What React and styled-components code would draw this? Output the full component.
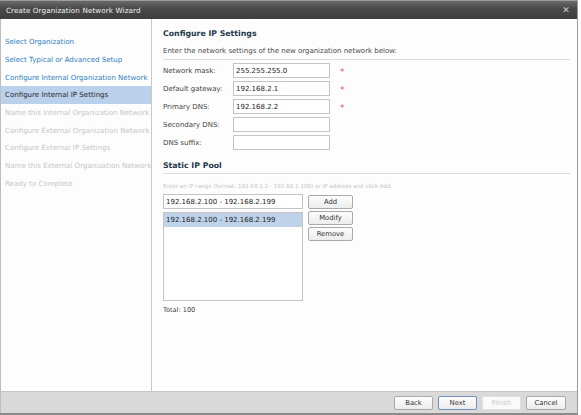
import styled, { createGlobalStyle } from "styled-components";

const Global = createGlobalStyle`
  html, body { margin: 0; padding: 0; background: #ffffff; }
  body { font-family: "DejaVu Sans", Verdana, sans-serif; font-size: 7px; color: #333; }
`;

const steps = [
  { label: "Select Organization", state: "done" },
  { label: "Select Typical or Advanced Setup", state: "done" },
  { label: "Configure Internal Organization Network", state: "done" },
  { label: "Configure Internal IP Settings", state: "current" },
  { label: "Name this Internal Organization Network", state: "todo" },
  { label: "Configure External Organization Network", state: "todo" },
  { label: "Configure External IP Settings", state: "todo" },
  { label: "Name this External Organization Network", state: "todo" },
  { label: "Ready to Complete", state: "todo" },
];

const fields = [
  { label: "Network mask:", value: "255.255.255.0", required: true },
  { label: "Default gateway:", value: "192.168.2.1", required: true },
  { label: "Primary DNS:", value: "192.168.2.2", required: true },
  { label: "Secondary DNS:", value: "", required: false },
  { label: "DNS suffix:", value: "", required: false },
];

export default function App() {
  return (
    <>
      <Global />
      <Window>
        <TitleBar>
          <span>Create Organization Network Wizard</span>
          <Close>✕</Close>
        </TitleBar>
        <Body>
          <Nav>
            {steps.map((s) => (
              <NavItem key={s.label} $state={s.state}>
                {s.label}
              </NavItem>
            ))}
          </Nav>
          <Content>
            <Heading>Configure IP Settings</Heading>
            <Intro>Enter the network settings of the new organization network below:</Intro>
            <Rule />
            <Fields>
              {fields.map((f) => (
                <FieldRow key={f.label}>
                  <FieldLabel>{f.label}</FieldLabel>
                  <TextBox>{f.value}</TextBox>
                  {f.required && <Star>*</Star>}
                </FieldRow>
              ))}
            </Fields>
            <Heading $top={11}>Static IP Pool</Heading>
            <Rule $top={2} />
            <Hint>
              Enter an IP range (format: 192.68.1.2 - 192.68.1.100) or IP address and click Add.
            </Hint>
            <Pool>
              <PoolColumn>
                <PoolInput>192.168.2.100 - 192.168.2.199</PoolInput>
                <ListBox>
                  <ListItem $selected>192.168.2.100 - 192.168.2.199</ListItem>
                </ListBox>
              </PoolColumn>
              <PoolButtons>
                <Btn $w={45}>Add</Btn>
                <Btn $w={45}>Modify</Btn>
                <Btn $w={45}>Remove</Btn>
              </PoolButtons>
            </Pool>
            <Total>Total: 100</Total>
          </Content>
        </Body>
        <Footer>
          <Btn $w={39}>Back</Btn>
          <Btn $w={39} $primary>Next</Btn>
          <Btn $w={39} disabled>Finish</Btn>
          <Btn $w={40}>Cancel</Btn>
        </Footer>
      </Window>
    </>
  );
}

const Window = styled.div`
  width: 577px;
  height: 413px;
  border-right: 1px solid #9a9a9a;
  border-bottom: 2px solid #8a8a8a;
  display: flex;
  flex-direction: column;
  background: #fdfdfd;
`;

const TitleBar = styled.div`
  height: 19px;
  flex: none;
  display: flex;
  align-items: center;
  justify-content: space-between;
  padding: 0 7px 0 6px;
  background: linear-gradient(#6a6a6a, #4a4a4a 40%, #3e3e3e);
  border-top: 1px solid #9c9c9c;
  box-sizing: border-box;
  color: #f0f0f0;
  font-size: 7.2px;
  letter-spacing: 0.1px;
`;

const Close = styled.span`
  font-size: 9px;
  color: #cfcfcf;
  font-weight: bold;
`;

const Body = styled.div`
  flex: 1;
  display: flex;
  border-left: 1px solid #bdbdbd;
  min-height: 0;
`;

const Nav = styled.div`
  width: 150px;
  flex: none;
  border-right: 1px solid #c8c8c8;
  padding-top: 14px;
  display: flex;
  flex-direction: column;
`;

const NavItem = styled.div`
  height: 17.7px;
  display: flex;
  align-items: center;
  padding-left: 4px;
  white-space: nowrap;
  font-size: 7.05px;
  color: ${(p) =>
    p.$state === "done" ? "#2f7fc4" : p.$state === "current" ? "#2a2a2a" : "#c6c6c6"};
  background: ${(p) => (p.$state === "current" ? "#bbd0ea" : "transparent")};
`;

const Content = styled.div`
  flex: 1;
  padding: 10px 7px 0 11px;
  display: flex;
  flex-direction: column;
`;

const Heading = styled.div`
  font-weight: bold;
  font-size: 7.8px;
  line-height: 10px;
  color: #23384c;
  margin-top: ${(p) => p.$top || 0}px;
`;

const Intro = styled.div`
  margin-top: 8px;
  line-height: 9px;
  color: #4a4a4a;
`;

const Rule = styled.div`
  height: 1px;
  background: #dcdcdc;
  margin-top: ${(p) => (p.$top != null ? p.$top : 3)}px;
`;

const Fields = styled.div`
  margin-top: 3px;
  display: flex;
  flex-direction: column;
  gap: 3px;
`;

const FieldRow = styled.div`
  display: flex;
  align-items: center;
  height: 15px;
`;

const FieldLabel = styled.div`
  width: 70px;
  color: #444;
`;

const TextBox = styled.div`
  width: 97px;
  height: 15px;
  box-sizing: border-box;
  border: 1px solid #c4c4c4;
  background: #fff;
  padding-left: 2px;
  display: flex;
  align-items: center;
  color: #222;
`;

const Star = styled.span`
  margin-left: 10px;
  color: #e05a5a;
  font-size: 9px;
  padding-top: 3px;
`;

const Hint = styled.div`
  margin-top: 9px;
  line-height: 7px;
  font-size: 5.6px;
  color: #c4c4c4;
  white-space: nowrap;
`;

const Pool = styled.div`
  margin-top: 4px;
  display: flex;
  gap: 5px;
`;

const PoolColumn = styled.div`
  display: flex;
  flex-direction: column;
  gap: 3px;
`;

const PoolInput = styled(TextBox)`
  width: 140px;
  height: 15px;
`;

const ListBox = styled.div`
  width: 140px;
  height: 89px;
  box-sizing: border-box;
  border: 1px solid #c4c4c4;
  background: #fff;
`;

const ListItem = styled.div`
  height: 14px;
  display: flex;
  align-items: center;
  padding-left: 2px;
  color: #222;
  background: ${(p) => (p.$selected ? "#bed3ea" : "transparent")};
`;

const PoolButtons = styled.div`
  padding-top: 1px;
  display: flex;
  flex-direction: column;
  gap: 2px;
`;

const Btn = styled.button`
  width: ${(p) => p.$w}px;
  height: 14px;
  padding: 0;
  box-sizing: border-box;
  font-family: "DejaVu Sans", Verdana, sans-serif;
  font-size: 6.8px;
  color: ${(p) => (p.disabled ? "#c8c8c8" : "#333")};
  background: ${(p) =>
    p.disabled ? "#fafafa" : "linear-gradient(#fdfdfd, #ececec)"};
  border: 1px solid ${(p) => (p.$primary ? "#6f93bd" : p.disabled ? "#e0e0e0" : "#a9a9a9")};
  border-radius: 2px;
`;

const Total = styled.div`
  margin-top: 5px;
  color: #444;
  font-size: 6.6px;
`;

const Footer = styled.div`
  height: 21px;
  flex: none;
  display: flex;
  align-items: center;
  justify-content: flex-end;
  gap: 5px;
  padding-right: 11px;
  background: #d9d9d9;
  border-top: 1px solid #c6c6c6;
  border-left: 1px solid #bdbdbd;
`;
